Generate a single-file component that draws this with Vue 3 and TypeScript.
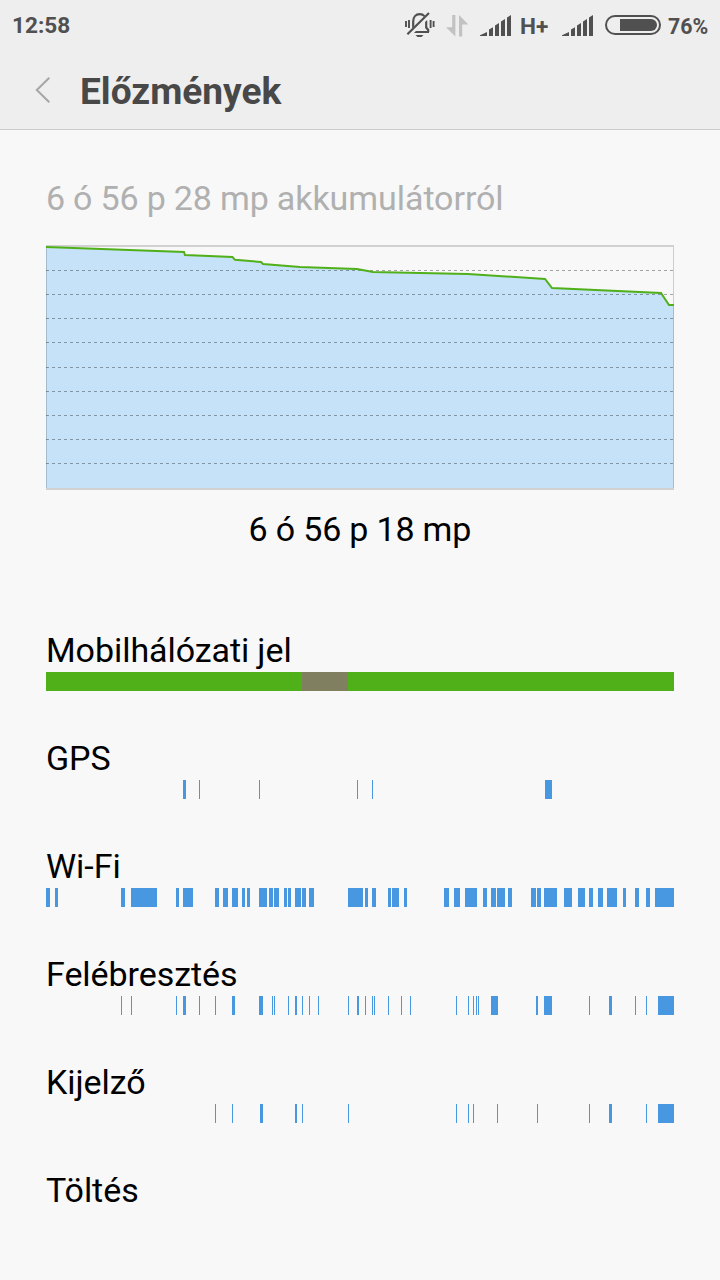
<script setup lang="ts">
type Segment = [start: number, width: number]

interface Track {
  label: string
  segments: Segment[]
}

const thin = (...starts: number[]): Segment[] => starts.map((s): Segment => [s, 1])

// Positions are in screen pixels; the timeline begins 46px from the left edge.
const origin = 46

const tracks: Track[] = [
  {
    label: 'GPS',
    segments: [[183, 3], ...thin(199, 259, 357, 372), [545, 7]],
  },
  {
    label: 'Wi-Fi',
    segments: [
      [46, 4], [55, 3], [121, 4], [131, 26], [176, 3], [183, 10], [215, 4], [223, 5],
      [232, 6], [242, 3], [247, 3], [259, 8], [269, 4], [274, 5], [284, 3], [288, 3],
      [295, 6], [302, 4], [309, 5], [348, 15], [365, 3], [372, 4], [388, 3], [392, 7],
      [404, 3], [444, 5], [454, 6], [465, 12], [483, 4], [491, 5], [497, 8], [508, 4],
      [531, 5], [537, 4], [544, 13], [564, 8], [578, 7], [589, 4], [598, 5], [607, 10],
      [623, 3], [635, 4], [646, 4], [655, 19],
    ],
  },
  {
    label: 'Felébresztés',
    segments: [
      ...thin(121, 131, 176, 199, 215, 272, 274, 288, 302, 309, 318, 348, 365, 372, 374),
      ...thin(388, 401, 410, 456, 468, 473, 476, 478, 589, 635, 646),
      [183, 3], [232, 3], [259, 4], [295, 2], [357, 2], [491, 7], [536, 2], [544, 8],
      [609, 3], [658, 16],
    ],
  },
  {
    label: 'Kijelző',
    segments: [
      ...thin(215, 232, 302, 348, 456, 468, 473, 497, 537, 589, 646),
      [260, 3], [295, 2], [609, 3], [658, 16],
    ],
  },
  { label: 'Töltés', segments: [] },
]

const gridLines = [25, 49, 73, 97, 122, 146, 170, 194, 218]

const level =
  '0,2 138,7 139,10 186.5,12 189,14.8 215,17 217,19 254,22 311,24 327,27 422,29 499,34 506,43 615,48 623,60 628,60'
</script>

<template>
  <div class="screen">
    <header class="top">
      <div class="status">
        <span class="clock">12:58</span>
        <svg class="bell" width="30" height="26" viewBox="0 0 30 26" fill="none" stroke="#505050">
          <path d="M5.5 20H24M8.2 18V9.5C8.2 5 10.8 2.2 14.7 2.2S21.2 5 21.2 9.5V15.5L23.2 18V20" stroke-width="2.2" />
          <path d="M10.5 23H18.5L16.5 25H12.5Z" fill="#505050" stroke="none" />
          <path d="M4 22.7L23.8 3.2" stroke="#eeeeee" stroke-width="4.6" />
          <path d="M2.4 22.2L24 1" stroke-width="2.2" />
          <path d="M1 9V15M4 8V16M25.6 8V16M28.6 9V15" stroke-width="1.9" />
        </svg>
        <svg class="arrows" width="23" height="22" viewBox="0 0 23 22" fill="#c2c2c2">
          <path d="M6.2 0H9.4V21.4L0 12.2H6.2ZM13 0L22.4 9.4H16.2V21.4H13Z" />
        </svg>
        <svg class="signal" width="32" height="22" viewBox="0 0 32 22" fill="#505050">
          <path d="M0 21V20.2L7 17V21ZM9 21V14.5L13 12.3V21ZM15 21V10.5L19 8V21ZM21 21V6.5L25 4V21ZM27 21V2.5L31 0V21Z" />
        </svg>
        <span class="net">H+</span>
        <svg class="signal second" width="32" height="22" viewBox="0 0 32 22" fill="#505050">
          <path d="M0 21V20.2L7 17V21ZM9 21V14.5L13 12.3V21ZM15 21V10.5L19 8V21ZM21 21V6.5L25 4V21ZM27 21V2.5L31 0V21Z" />
        </svg>
        <svg class="battery" width="56" height="20" viewBox="0 0 56 20">
          <rect x="1" y="1" width="54" height="18" rx="9" fill="none" stroke="#505050" stroke-width="2" />
          <path d="M15 4H46A6 6 0 0 1 46 16H15Z" fill="#505050" />
        </svg>
        <span class="percent">76%</span>
      </div>
      <div class="bar">
        <svg class="back" width="16" height="28" viewBox="0 0 16 28" fill="none" stroke="#a6a6a6" stroke-width="2">
          <path d="M14.3 1.7L1.8 14L14.3 26.3" />
        </svg>
        <h1>Előzmények</h1>
      </div>
    </header>
    <main>
      <p class="summary">6 ó 56 p 28 mp akkumulátorról</p>
      <svg class="chart" width="628" height="245" viewBox="0 0 628 245" fill="none">
        <polygon :points="level + ' 628,243 0,243'" fill="#c6e2f8" />
        <path d="M0 1H628M0 244H628" stroke="#d1d1d1" stroke-width="2" />
        <path d="M.5 2V243M627.5 2V243" stroke="#000" stroke-opacity=".17" />
        <path
          v-for="y in gridLines"
          :key="y"
          :d="`M0 ${y + 0.5}H628`"
          stroke="#000"
          stroke-opacity=".34"
          stroke-dasharray="3 3"
        />
        <polyline :points="level" stroke="#50b01a" stroke-width="2" />
      </svg>
      <p class="duration">6 ó 56 p 18 mp</p>
      <section class="track">
        <h2>Mobilhálózati jel</h2>
        <svg class="strip" width="628" height="19" shape-rendering="crispEdges">
          <rect width="628" height="19" fill="#50b01a" />
          <rect x="256" width="46" height="19" fill="#808060" />
        </svg>
      </section>
      <section v-for="t in tracks" :key="t.label" class="track">
        <h2>{{ t.label }}</h2>
        <svg class="strip" width="628" height="19" shape-rendering="crispEdges" fill="#4798e0">
          <rect v-for="[x, w] in t.segments" :key="x" :x="x - origin" :width="w" height="19" />
        </svg>
      </section>
    </main>
  </div>
</template>

<style>
body {
  margin: 0;
  background: #f8f8f8;
}
</style>

<style scoped>
.screen {
  width: 720px;
  height: 1280px;
  overflow: hidden;
  background: #f8f8f8;
  color: #000;
  font-family: Roboto, 'Noto Sans', sans-serif;
}
svg {
  display: block;
  flex: none;
}
h1,
h2,
p {
  margin: 0;
  font-weight: 400;
  white-space: nowrap;
}
.top {
  box-sizing: border-box;
  height: 130px;
  background: #eee;
  border-bottom: 1px solid #cbcbcb;
}
.status {
  display: flex;
  align-items: flex-start;
  height: 50px;
  color: #505050;
  font-size: 22.6px;
  font-weight: 700;
  line-height: 52px;
}
.clock {
  width: 392px;
  padding-left: 12px;
}
.bell {
  margin: 12px 11px 0 1px;
}
.arrows {
  margin: 15px 11px 0 0;
}
.signal {
  margin-top: 15px;
}
.net {
  width: 42px;
  padding-left: 8px;
  box-sizing: border-box;
  line-height: 54px;
}
.second {
  margin-left: 8px;
}
.battery {
  margin: 15px 7px 0 11px;
}
.percent {
  font-size: 21.3px;
  line-height: 53px;
}
.bar {
  display: flex;
  align-items: center;
  height: 80px;
  padding-left: 35px;
}
.back {
  margin-right: 29px;
}
h1 {
  padding-top: 4px;
  color: #484848;
  font-size: 37.1px;
  font-weight: 700;
  line-height: 76px;
}
main {
  padding: 0 46px;
}
.summary,
.duration,
h2 {
  font-size: 34px;
  letter-spacing: -0.06px;
  word-spacing: -0.3px;
}
.summary {
  height: 115px;
  color: #b0b0b0;
  line-height: 136px;
}
.duration {
  height: 138px;
  line-height: 78px;
  text-align: center;
}
.track {
  height: 108px;
}
h2 {
  height: 44px;
  line-height: 44px;
}
</style>
